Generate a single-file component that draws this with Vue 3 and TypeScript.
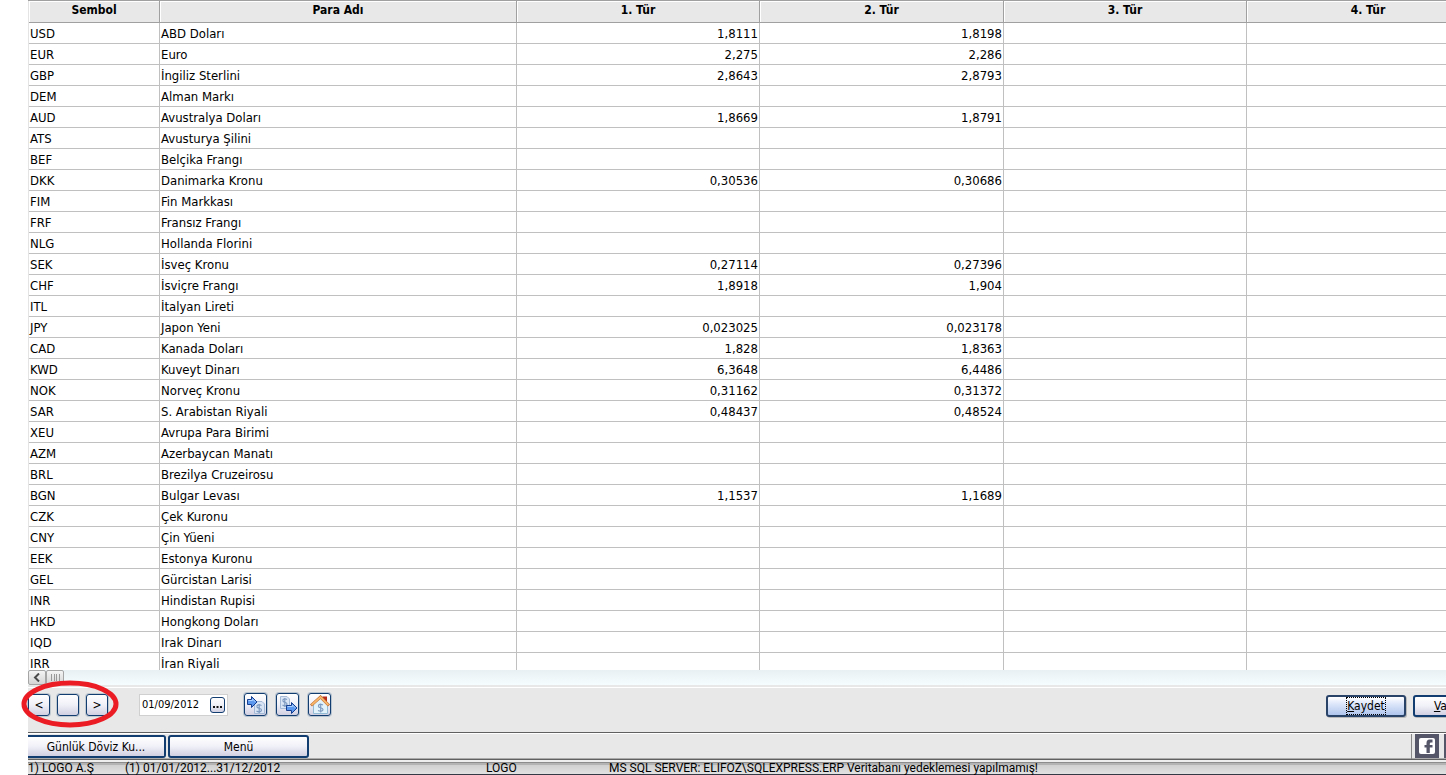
<script setup lang="ts">
import { ref } from 'vue'

interface Rate {
  code: string
  name: string
  first?: string
  second?: string
}

const rates: Rate[] = [
  { code: 'USD', name: 'ABD Doları', first: '1,8111', second: '1,8198' },
  { code: 'EUR', name: 'Euro', first: '2,275', second: '2,286' },
  { code: 'GBP', name: 'İngiliz Sterlini', first: '2,8643', second: '2,8793' },
  { code: 'DEM', name: 'Alman Markı' },
  { code: 'AUD', name: 'Avustralya Doları', first: '1,8669', second: '1,8791' },
  { code: 'ATS', name: 'Avusturya Şilini' },
  { code: 'BEF', name: 'Belçika Frangı' },
  { code: 'DKK', name: 'Danimarka Kronu', first: '0,30536', second: '0,30686' },
  { code: 'FIM', name: 'Fin Markkası' },
  { code: 'FRF', name: 'Fransız Frangı' },
  { code: 'NLG', name: 'Hollanda Florini' },
  { code: 'SEK', name: 'İsveç Kronu', first: '0,27114', second: '0,27396' },
  { code: 'CHF', name: 'İsviçre Frangı', first: '1,8918', second: '1,904' },
  { code: 'ITL', name: 'İtalyan Lireti' },
  { code: 'JPY', name: 'Japon Yeni', first: '0,023025', second: '0,023178' },
  { code: 'CAD', name: 'Kanada Doları', first: '1,828', second: '1,8363' },
  { code: 'KWD', name: 'Kuveyt Dinarı', first: '6,3648', second: '6,4486' },
  { code: 'NOK', name: 'Norveç Kronu', first: '0,31162', second: '0,31372' },
  { code: 'SAR', name: 'S. Arabistan Riyali', first: '0,48437', second: '0,48524' },
  { code: 'XEU', name: 'Avrupa Para Birimi' },
  { code: 'AZM', name: 'Azerbaycan Manatı' },
  { code: 'BRL', name: 'Brezilya Cruzeirosu' },
  { code: 'BGN', name: 'Bulgar Levası', first: '1,1537', second: '1,1689' },
  { code: 'CZK', name: 'Çek Kuronu' },
  { code: 'CNY', name: 'Çin Yüeni' },
  { code: 'EEK', name: 'Estonya Kuronu' },
  { code: 'GEL', name: 'Gürcistan Larisi' },
  { code: 'INR', name: 'Hindistan Rupisi' },
  { code: 'HKD', name: 'Hongkong Doları' },
  { code: 'IQD', name: 'Irak Dinarı' },
  { code: 'IRR', name: 'İran Riyali' },
]

const date = ref('01/09/2012')
</script>

<template>
  <main class="window">
    <section class="grid">
      <table>
        <colgroup>
          <col class="c-code" />
          <col class="c-name" />
          <col class="c-rate" />
          <col class="c-rate-wide" />
          <col class="c-rate" />
          <col class="c-rate" />
        </colgroup>
        <thead>
          <tr>
            <th>Sembol</th>
            <th>Para Adı</th>
            <th v-for="n in 4" :key="n">{{ n }}. Tür</th>
          </tr>
        </thead>
        <tbody>
          <tr v-for="r in rates" :key="r.code">
            <td>{{ r.code }}</td>
            <td>{{ r.name }}</td>
            <td class="num">{{ r.first }}</td>
            <td class="num">{{ r.second }}</td>
            <td></td>
            <td></td>
          </tr>
        </tbody>
      </table>
    </section>

    <div class="scroll">
      <button class="scroll-btn" aria-label="Sola kaydır">
        <svg width="8" height="9" viewBox="0 0 8 9"><path d="M6 0.5 2 4.5 6 8.5" fill="none" stroke="#4a4a4a" stroke-width="2" /></svg>
      </button>
      <button class="scroll-btn thumb" aria-label="Kaydırma kutusu">
        <svg width="9" height="7" viewBox="0 0 9 7"><path d="M.5 0V7M3.5 0V7M5.5 0V7M8.5 0V7" stroke="#999" /></svg>
      </button>
    </div>

    <div class="toolbar">
      <nav class="pager" aria-label="Kayıtlar">
        <button class="btn square">&lt;</button>
        <button class="btn square" aria-label="Seç"></button>
        <button class="btn square">&gt;</button>
        <svg class="mark" width="98" height="48" viewBox="0 0 98 48">
          <ellipse cx="49" cy="24" rx="46" ry="21" fill="none" stroke="#ec1c24" stroke-width="5" />
        </svg>
      </nav>
      <div class="date">
        <input v-model="date" aria-label="Tarih" />
        <button class="btn dots" aria-label="Tarih seç">
          <svg width="9" height="2" viewBox="0 0 9 2"><path d="M0 0H2V2H0ZM3.5 0H5.5V2H3.5ZM7 0H9V2H7Z" fill="#111" /></svg>
        </button>
      </div>
      <div class="tools">
        <button class="btn tool" aria-label="İçeri aktar">
          <svg width="20" height="20" viewBox="0 0 20 20">
            <path d="M8.500 6.500H16L18.500 9V18.500H8.500Z" fill="#d9e5f5" stroke="#a3b9d6" />
            <path d="M15.500 10.500C13 9 10.500 10 11 12C11.500 13.500 15.500 13 15.500 15C15.500 17 12.500 17.500 10.500 16M13.200 9V18" fill="none" stroke="#7d9ac0" stroke-width="1.200" />
            <path d="M1.500 4.500H5.500V1.500L11 7L5.500 12.500V9.500H1.500Z" fill="#5b98ee" stroke="#173f91" />
            <path d="M2.500 5.500H6.500V4L9.500 7" fill="none" stroke="#acd1ff" />
          </svg>
        </button>
        <button class="btn tool" aria-label="Dışarı aktar">
          <svg width="20" height="20" viewBox="0 0 20 20">
            <path d="M2.500 1.500H9L11.500 4V13.500H2.500Z" fill="#d9e5f5" stroke="#a3b9d6" />
            <path d="M9 4.500C6.500 3 4.500 4 5 6C5.500 7.500 9 7 9 9C9 11 6.500 11.500 4.500 10M6.800 3V12" fill="none" stroke="#7d9ac0" stroke-width="1.200" />
            <path d="M8.500 10.500H13.500V7.500L19 13L13.500 18.500V15.500H8.500Z" fill="#5b98ee" stroke="#173f91" />
            <path d="M9.500 11.500H14.500V10L17.500 13" fill="none" stroke="#acd1ff" />
          </svg>
        </button>
        <button class="btn tool" aria-label="Merkez">
          <svg width="20" height="20" viewBox="0 0 20 20">
            <path d="M12.500 1.500H17V8H12.500Z" fill="#b92c19" />
            <path d="M3.500 9V18.500H17.500V9L10.500 3Z" fill="#e3f3fc" stroke="#94bbd6" />
            <path d="M1 10.500 10.500 2 19 10.500" fill="none" stroke="#b9692d" stroke-width="3" />
            <path d="M1.500 10 10.500 2 18.500 10" fill="none" stroke="#f7b56b" stroke-width="2" />
            <path d="M13 10C10.500 8.500 8 9.500 8.500 11.500C9 13 13 12.500 13 14.500C13 16.500 10 16.500 8 15.500M10.700 8.500V17.500" fill="none" stroke="#7d9ac0" stroke-width="1.200" />
          </svg>
        </button>
      </div>
      <div class="actions">
        <button class="btn action primary"><span><u>K</u>aydet</span></button>
        <button class="btn action"><span><u>V</u>azgeç</span></button>
      </div>
    </div>

    <div class="tasks">
      <button class="btn task first">Günlük Döviz Ku...</button>
      <button class="btn task">Menü</button>
      <div class="social">
        <a href="#" aria-label="Facebook">
          <svg width="24" height="24" viewBox="0 0 24 24">
            <rect width="24" height="24" fill="#555668" />
            <rect x="4" y="4" width="16" height="16" rx="2" fill="#fff" />
            <path d="M17.500 5.500V8.500H16Q14.800 8.500 14.800 9.700V11H17.500V13.500H14.800V19H11.500V13.500H9.500V11H11.500V9Q11.500 5.500 14.500 5.500Z" fill="#555668" />
          </svg>
        </a>
        <a href="#" aria-label="Twitter">
          <svg width="24" height="24" viewBox="0 0 24 24">
            <rect width="24" height="24" fill="#555668" />
            <rect x="4" y="4" width="16" height="16" rx="2" fill="#fff" />
          </svg>
        </a>
      </div>
    </div>

    <footer class="status">
      <span class="firm">1) LOGO A.Ş</span>
      <span class="period">(1) 01/01/2012...31/12/2012</span>
      <span class="user">LOGO</span>
      <span class="server">MS SQL SERVER: ELIFOZ\SQLEXPRESS.ERP Veritabanı yedeklemesi yapılmamış!</span>
    </footer>
  </main>
</template>

<style>
body {
  margin: 0;
  background: #fff;
}
</style>

<style scoped>
* {
  box-sizing: border-box;
}
.window {
  display: flex;
  flex-direction: column;
  height: 100vh;
  padding-left: 28px;
  overflow: hidden;
  font: 12px/16px "DejaVu Sans Condensed", "DejaVu Sans", sans-serif;
  color: #000;
}
button,
input {
  font: inherit;
  color: inherit;
  margin: 0;
  padding: 0;
}
svg {
  display: block;
  flex: none;
}
.grid {
  flex: 1;
  min-height: 0;
  overflow: hidden;
  border-top: 1px solid #a0a0a0;
}
table {
  table-layout: fixed;
  width: 1462px;
  border-collapse: separate;
  border-spacing: 0;
  border-left: 1px solid #e4e4e4;
}
.c-code {
  width: 131px;
}
.c-name {
  width: 357px;
}
.c-rate {
  width: 243px;
}
.c-rate-wide {
  width: 244px;
}
th {
  height: 22px;
  padding: 0 0 4px;
  background: #e8e8e8;
  border-right: 1px solid #a0a0a0;
  border-bottom: 1px solid #a0a0a0;
  box-shadow: inset 1px 1px #fff;
  font-weight: bold;
}
td {
  height: 21px;
  padding: 1px 1px 0;
  border-right: 1px solid #c0c0c0;
  border-bottom: 1px solid #c0c0c0;
  font-size: 13px;
  white-space: nowrap;
}
.num {
  text-align: right;
}
.scroll {
  display: flex;
  flex: none;
  height: 15px;
  background: linear-gradient(#e8f0f3, #f6fdff);
}
.scroll-btn {
  display: flex;
  align-items: center;
  justify-content: center;
  width: 18px;
  border: 1px solid #a5a5a5;
  border-radius: 2px;
  background: linear-gradient(#f4f4f4, #d5d5d5);
}
.toolbar {
  display: flex;
  flex: none;
  align-items: center;
  height: 47px;
  padding-bottom: 8px;
  background: #e8e8e8;
  box-shadow: inset 0 2px #e8e8e8, inset 0 3px #fff;
}
.btn {
  display: flex;
  flex: none;
  align-items: center;
  justify-content: center;
  border: 2px solid #123d70;
  border-radius: 3px;
  background: linear-gradient(#fff, #f0f0f8 50%, #d0d0e2);
}
.pager {
  position: relative;
  display: flex;
  gap: 7px;
  width: 111px;
}
.square {
  width: 22px;
  height: 22px;
  border-width: 1px;
  box-shadow: 0 0 0 1px #c0c8d0;
}
.mark {
  position: absolute;
  left: -7px;
  top: -14px;
  pointer-events: none;
}
.date {
  display: flex;
  align-items: center;
  width: 89px;
  height: 22px;
  padding: 0 2px;
  border: 1px solid #d0d0d0;
  background: #fff;
}
.date input {
  flex: 1;
  min-width: 0;
  border: 0;
  background: none;
  font-size: 11px;
  outline: none;
}
.dots {
  width: 15px;
  height: 16px;
  border-width: 1px;
  padding-top: 5px;
}
.tools {
  display: flex;
  gap: 9px;
  margin-left: 16px;
}
.tool {
  width: 23px;
  height: 23px;
  border-width: 1px;
  box-shadow: 0 0 0 1px #b8c4d0;
}
.actions {
  display: flex;
  gap: 7px;
  margin: 3px -47px 0 auto;
}
.action {
  width: 80px;
  height: 22px;
  box-shadow: 1px 1px #b8b8b8;
}
.primary {
  border-color: #294268;
  background: linear-gradient(#fff, #dce6fa 40%, #afc5ec);
}
.primary span {
  outline: 1px dotted #000;
}
.tasks {
  display: flex;
  flex: none;
  gap: 2px;
  height: 28px;
  padding: 2px 0 1px;
  border-top: 1px solid #606060;
  border-bottom: 1px solid #606060;
  background: #e8e8e8;
  box-shadow: inset 0 1px #fff, inset 0 -1px #aaa;
}
.task {
  width: 141px;
  height: 23px;
}
.first {
  width: 138px;
  border-left: 0;
  border-radius: 0 3px 3px 0;
}
.social {
  display: flex;
  gap: 5px;
  margin: -1px -22px -1px auto;
  padding-left: 3px;
  border-left: 1px solid #888;
}
.status {
  display: flex;
  flex: none;
  height: 15px;
  padding-top: 1px;
  border-bottom: 1px solid #343a46;
  background: linear-gradient(#eee 0 2px, #8c8c8c 2px 3px, #b4b4b4 3px 5px, #d0d0d0 5px, #e2e2e2);
  font: 12px/14px Roboto, "Noto Sans", sans-serif;
  white-space: nowrap;
}
.firm {
  width: 97px;
}
.period {
  width: 361px;
}
.user {
  width: 123px;
}
</style>
